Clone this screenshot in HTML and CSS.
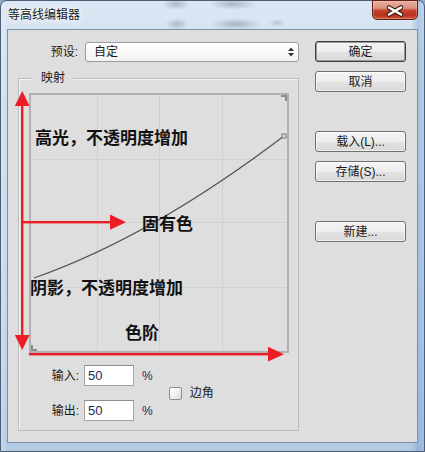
FILE: index.html
```html
<!DOCTYPE html>
<html lang="zh-CN">
<head>
<meta charset="utf-8">
<title>等高线编辑器</title>
<link rel="stylesheet" href="styles.css">
</head>
<body>
<div class="window">
  <div class="titlebar">
    <span class="title">等高线编辑器</span>
    <button class="close" aria-label="关闭">
      <svg width="44" height="19" viewBox="0 0 44 19">
        <path d="M16 6.5 L28 13.5 M28 6.5 L16 13.5" stroke="#3a1a14" stroke-width="4.6" stroke-linecap="round" fill="none"/>
        <path d="M16 6.5 L28 13.5 M28 6.5 L16 13.5" stroke="#ffffff" stroke-width="2.6" stroke-linecap="round" fill="none"/>
      </svg>
    </button>
  </div>
  <div class="client">
    <div class="left">
      <div class="preset">
        <span class="preset-label">预设:</span>
        <div class="select">
          <span class="select-text">自定</span>
          <svg class="spin" width="6" height="10" viewBox="0 0 6 10">
            <path d="M0 4 L3 0.5 L6 4 Z M0 6 L3 9.5 L6 6 Z" fill="#333"/>
          </svg>
        </div>
      </div>
      <div class="group">
        <div class="legend">映射</div>
        <div class="graph">
          <svg width="256" height="256" viewBox="0 0 256 256">
            <g stroke="#d0d0d0" stroke-width="1">
              <line x1="66.5" y1="0" x2="66.5" y2="256"/>
              <line x1="128.5" y1="0" x2="128.5" y2="256"/>
              <line x1="191.5" y1="0" x2="191.5" y2="256"/>
              <line x1="0" y1="64.5" x2="256" y2="64.5"/>
              <line x1="0" y1="127.5" x2="256" y2="127.5"/>
              <line x1="0" y1="192.5" x2="256" y2="192.5"/>
            </g>
            <path d="M250 1 H255 V6" stroke="#8c8c8c" stroke-width="2" fill="none"/>
            <path d="M1 250 V255 H6" stroke="#8c8c8c" stroke-width="2" fill="none"/>
            <path d="M3 183 Q120 142 253 41" stroke="#555555" stroke-width="1.3" fill="none"/>
            <rect x="251" y="39" width="4" height="4" fill="#dedede" stroke="#777777" stroke-width="1"/>
          </svg>
        </div>
        <div class="io">
          <div class="fields">
            <span class="lbl">输入:</span><div class="field">50</div><span class="pct">%</span>
            <span class="lbl">输出:</span><div class="field">50</div><span class="pct">%</span>
          </div>
          <div class="corner"><span class="check"></span><span>边角</span></div>
        </div>
      </div>
    </div>
    <div class="buttons">
      <button class="btn default">确定</button>
      <button class="btn">取消</button>
      <button class="btn gap">载入(L)...</button>
      <button class="btn">存储(S)...</button>
      <button class="btn gap">新建...</button>
    </div>
  </div>
  <div class="annotations">
    <svg width="425" height="452" viewBox="0 0 425 452">
      <g fill="#ee1d25" stroke="none">
        <rect x="21" y="104" width="2.4" height="233"/>
        <polygon points="22.2,91 14.8,106 29.6,106"/>
        <polygon points="22.2,350 14.8,335 29.6,335"/>
        <rect x="22" y="221" width="90" height="2.4"/>
        <polygon points="126,222.2 110,214.6 110,229.8"/>
        <rect x="29" y="353" width="241" height="2.4"/>
        <polygon points="284,354.2 268,346.8 268,361.6"/>
      </g>
    </svg>
    <span class="note n1">高光，不透明度增加</span>
    <span class="note n2">固有色</span>
    <span class="note n3">阴影，不透明度增加</span>
    <span class="note n4">色阶</span>
  </div>
</div>
</body>
</html>
```
FILE: styles.css
```css
* {
  box-sizing: border-box;
}

html,
body {
  margin: 0;
  padding: 0;
}

body {
  width: 425px;
  height: 452px;
  overflow: hidden;
  background: #8fa6c0;
  font-family: "Liberation Sans", "Noto Sans CJK SC", sans-serif;
  font-size: 12px;
  color: #1a1a1a;
}

.window {
  position: relative;
  width: 425px;
  height: 452px;
  display: flex;
  flex-direction: column;
  padding: 0 6px 8px;
  border: 1px solid #4b5e76;
  border-radius: 7px 7px 0 0;
  background:
    linear-gradient(to right, rgba(255, 255, 255, 0.25), rgba(255, 255, 255, 0) 6px, rgba(255, 255, 255, 0) 410px, rgba(90, 140, 200, 0.35) 417px, rgba(90, 140, 200, 0.2)),
    linear-gradient(to bottom, #dbe7f3 0, #cfdeee 80px, #c3d6eb 300px, #b3cae3 452px);
}

.titlebar {
  height: 28px;
  margin: 0 -6px;
  padding: 0 6px;
  display: flex;
  align-items: flex-start;
  justify-content: space-between;
  background:
    radial-gradient(ellipse 14px 6px at 175px 3px, rgba(110, 122, 136, 0.45), rgba(110, 122, 136, 0)),
    radial-gradient(ellipse 24px 6px at 232px 3px, rgba(110, 122, 136, 0.45), rgba(110, 122, 136, 0)),
    radial-gradient(ellipse 12px 6px at 176px 23px, rgba(110, 122, 136, 0.4), rgba(110, 122, 136, 0)),
    radial-gradient(ellipse 26px 6px at 235px 23px, rgba(110, 122, 136, 0.45), rgba(110, 122, 136, 0)),
    radial-gradient(ellipse 8px 4px at 276px 22px, rgba(110, 122, 136, 0.3), rgba(110, 122, 136, 0));
}

.title {
  margin: 6px 0 0 1px;
  font-family: "Noto Sans CJK SC", sans-serif;
  font-size: 12px;
  line-height: 14px;
  color: #1c1c1c;
  text-shadow: 0 0 5px #ffffff, 0 0 9px rgba(255, 255, 255, 0.9);
}

.close {
  width: 46px;
  height: 20px;
  margin-top: -1px;
  padding: 0;
  display: flex;
  align-items: center;
  justify-content: center;
  border: 1px solid #5e2219;
  border-radius: 0 0 5px 5px;
  background: linear-gradient(to bottom, #e9b2a4 0, #dc8f7e 40%, #c5442d 52%, #b7321c 78%, #d0583d 100%);
  box-shadow: inset 0 0 0 1px rgba(255, 200, 190, 0.35);
}

.close svg {
  display: block;
}

.client {
  flex: 1;
  display: flex;
  gap: 16px;
  padding: 11px 0 0 10px;
  background: #dedede;
  border: 1px solid #7d90a8;
}

.left {
  width: 281px;
}

.preset {
  display: flex;
  align-items: center;
  height: 20px;
  margin-top: 1px;
}

.preset-label {
  width: 67px;
  padding-right: 7px;
  text-align: right;
  line-height: 14px;
}

.select {
  width: 214px;
  height: 20px;
  display: flex;
  align-items: center;
  padding: 0 4px 0 8px;
  border: 1px solid #9c9c9c;
  border-radius: 3px;
  background: linear-gradient(to bottom, #ffffff, #f3f3f3);
}

.select-text {
  line-height: 14px;
}

.spin {
  display: block;
  margin-left: auto;
}

.group {
  position: relative;
  margin-top: 16px;
  padding: 0 10px 9px;
  border: 1px solid #bdbdbd;
  box-shadow: inset 1px 1px 0 #f2f2f2;
}

.legend {
  display: table;
  height: 12px;
  margin: -7px 0 0 4px;
  padding: 0 8px;
  line-height: 12px;
  background: #dedede;
}

.graph {
  width: 260px;
  height: 260px;
  margin-top: 9px;
  border: 2px solid #b0b0b0;
}

.graph svg {
  display: block;
}

.io {
  display: flex;
  align-items: center;
  margin-top: 12px;
}

.fields {
  display: grid;
  grid-template-columns: 50px auto auto;
  grid-auto-rows: 21px;
  row-gap: 14px;
  align-items: center;
}

.lbl {
  text-align: right;
  line-height: 14px;
  white-space: nowrap;
}

.field {
  width: 50px;
  height: 21px;
  margin-left: 5px;
  padding: 0 3px;
  border: 1px solid #a3a3a3;
  border-top-color: #8c8c8c;
  background: #ffffff;
  font-size: 13px;
  line-height: 19px;
  color: #1e2752;
}

.pct {
  margin-left: 8px;
  font-size: 12px;
  color: #1e2752;
}

.corner {
  display: flex;
  align-items: center;
  margin-left: 16px;
  line-height: 14px;
}

.check {
  width: 13px;
  height: 13px;
  margin-right: 8px;
  border: 1px solid #8e8f8f;
  border-radius: 2px;
  background: linear-gradient(135deg, #ffffff 0, #f1f1f1 50%, #dcdcdc 100%);
}

.buttons {
  width: 91px;
  display: flex;
  flex-direction: column;
}

.btn {
  height: 21px;
  margin: 0 0 9px;
  padding: 0;
  border: 1px solid #707070;
  border-radius: 3px;
  background: linear-gradient(to bottom, #f4f4f4 0, #ededed 50%, #e2e2e2 51%, #d9d9d9 100%);
  box-shadow: inset 0 0 0 1px rgba(255, 255, 255, 0.6);
  font-family: "Liberation Sans", "Noto Sans CJK SC", sans-serif;
  font-size: 12px;
  line-height: 14px;
  color: #1a1a1a;
}

.btn.default {
  border-color: #3d3d3d;
  box-shadow: inset 0 0 0 1px #9a9a9a;
}

.btn.gap {
  margin-top: 30px;
}

.annotations {
  position: absolute;
  left: -1px;
  top: -1px;
  width: 425px;
  height: 452px;
  pointer-events: none;
}

.annotations svg {
  position: absolute;
  left: 0;
  top: 0;
}

.note {
  position: absolute;
  font-family: "Noto Sans CJK SC", sans-serif;
  font-weight: 700;
  font-size: 17px;
  line-height: 20px;
  color: #111111;
  white-space: nowrap;
}

.n1 {
  left: 35px;
  top: 127px;
}

.n2 {
  left: 142px;
  top: 213px;
}

.n3 {
  left: 30px;
  top: 277px;
}

.n4 {
  left: 125px;
  top: 322px;
}
```
